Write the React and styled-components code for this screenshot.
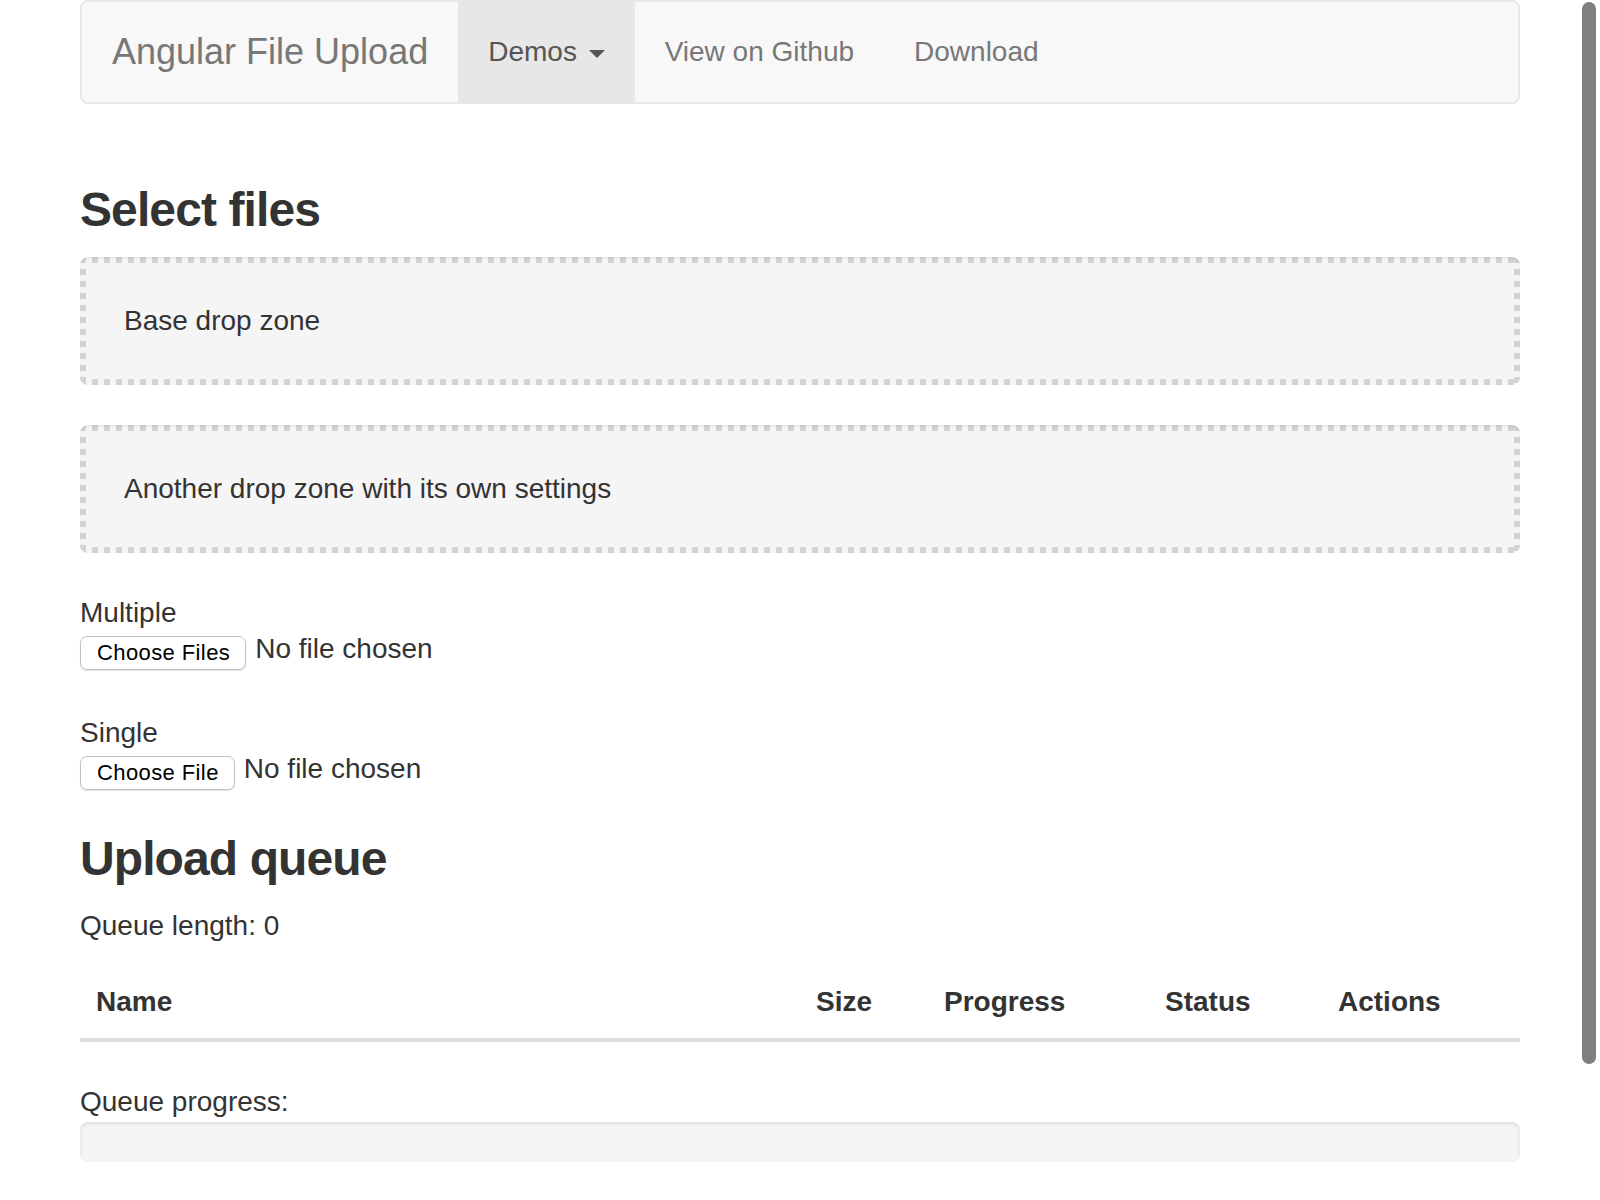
import React from "react";
import styled, { createGlobalStyle } from "styled-components";

const GlobalStyle = createGlobalStyle`
  html {
    overflow: hidden;
  }

  body {
    margin: 0;
    background: #fff;
    color: #333;
    font-family: "Liberation Sans", Arial, Helvetica, sans-serif;
    font-size: 28px;
    line-height: 40px;
  }

  * {
    box-sizing: border-box;
  }
`;

const Container = styled.div`
  width: 1500px;
  margin: 0 auto;
  padding: 0 30px;
`;

const Navbar = styled.nav`
  display: flex;
  height: 104px;
  margin-bottom: 40px;
  background: #f8f8f8;
  border: 2px solid #e7e7e7;
  border-radius: 8px;
`;

const Brand = styled.a`
  padding: 30px;
  font-size: 36px;
  line-height: 40px;
  color: #777;
  text-decoration: none;
  white-space: nowrap;
`;

const NavList = styled.ul`
  display: flex;
  margin: 0;
  padding: 0;
  list-style: none;
`;

const NavItem = styled.li`
  display: block;
`;

const NavLink = styled.a`
  display: block;
  padding: 30px;
  line-height: 40px;
  color: ${(p) => (p.$open ? "#555" : "#777")};
  background: ${(p) => (p.$open ? "#e7e7e7" : "transparent")};
  text-decoration: none;
  white-space: nowrap;
`;

const Caret = styled.b`
  display: inline-block;
  width: 0;
  height: 0;
  margin-left: 4px;
  vertical-align: middle;
  border-top: 8px solid;
  border-right: 8px solid transparent;
  border-left: 8px solid transparent;
`;

const Column = styled.div`
  display: flow-root;
  margin-bottom: ${(p) => p.$gap || 0}px;
`;

const Heading = styled.h3`
  margin: 40px 0 20px;
  font-size: 48px;
  line-height: 1.1;
  font-weight: 700;
  letter-spacing: -0.9px;
  color: #333;
`;

/* square dots, like the thick dotted border of the original */
const dots = "#d3d3d3 0 6px, transparent 6px 12px";

const DropZone = styled.div`
  min-height: 40px;
  padding: 44px;
  margin-bottom: 40px;
  border-radius: 8px;
  background:
    repeating-linear-gradient(90deg, ${dots}) left top / 100% 6px no-repeat,
    repeating-linear-gradient(90deg, ${dots}) left bottom / 100% 6px no-repeat,
    repeating-linear-gradient(180deg, ${dots}) left top / 6px 100% no-repeat,
    repeating-linear-gradient(180deg, ${dots}) right top / 6px 100% no-repeat,
    #f5f5f5;
  box-shadow: inset 0 2px 2px rgba(0, 0, 0, 0.05);
`;

const FieldLabel = styled.div`
  line-height: 40px;
`;

const FilePicker = styled.label`
  display: flex;
  align-items: flex-start;
  gap: 9px;
  height: 40px;

  input {
    display: none;
  }
`;

const ChooseButton = styled.span`
  display: inline-flex;
  align-items: center;
  height: 34px;
  margin-top: 3px;
  padding: 0 15px 0 16px;
  background: #fff;
  border: 1px solid #c2c2c2;
  border-radius: 7px;
  box-shadow: 0 1px 1px rgba(0, 0, 0, 0.12);
  color: #000;
  font-size: 22px;
  letter-spacing: 0.4px;
  line-height: 1;
  white-space: nowrap;
`;

const FileName = styled.span`
  line-height: 32px;
  white-space: nowrap;
`;

const Spacer = styled.div`
  height: 40px;
`;

const Paragraph = styled.p`
  margin: 0 0 20px;
`;

const Table = styled.table`
  width: 100%;
  margin-bottom: 40px;
  border-collapse: collapse;
  table-layout: fixed;
`;

const HeadCell = styled.th`
  width: ${(p) => p.$width}px;
  padding: 16px;
  line-height: 40px;
  text-align: left;
  vertical-align: bottom;
  font-weight: 700;
  border-bottom: 4px solid #ddd;
`;

const Progress = styled.div`
  height: 40px;
  margin-bottom: 40px;
  overflow: hidden;
  background: #f5f5f5;
  border-radius: 8px;
  box-shadow: inset 0 2px 4px rgba(0, 0, 0, 0.1);
`;

const ProgressBar = styled.div`
  height: 100%;
  background: #337ab7;
`;

const Scrollbar = styled.div`
  position: fixed;
  top: 2px;
  right: 4px;
  width: 14px;
  height: 1062px;
  background: #7f7f7f;
  border-radius: 7px;
`;

const columns = [
  { label: "Name", width: 720 },
  { label: "Size", width: 128 },
  { label: "Progress", width: 221 },
  { label: "Status", width: 173 },
  { label: "Actions", width: 198 },
];

function FileSelect({ label, multiple }) {
  return (
    <>
      <FieldLabel>{label}</FieldLabel>
      <FilePicker>
        <input type="file" multiple={multiple} />
        <ChooseButton>{multiple ? "Choose Files" : "Choose File"}</ChooseButton>
        <FileName>No file chosen</FileName>
      </FilePicker>
    </>
  );
}

export default function App() {
  const queue = [];
  const progress = 0;

  return (
    <>
      <GlobalStyle />
      <Container>
        <Navbar>
          <Brand href="#">Angular File Upload</Brand>
          <NavList>
            <NavItem>
              <NavLink href="#" $open>
                Demos <Caret />
              </NavLink>
            </NavItem>
            <NavItem>
              <NavLink href="#">View on Github</NavLink>
            </NavItem>
            <NavItem>
              <NavLink href="#">Download</NavLink>
            </NavItem>
          </NavList>
        </Navbar>

        <Column>
          <Heading>Select files</Heading>
          <DropZone>Base drop zone</DropZone>
          <DropZone>Another drop zone with its own settings</DropZone>
          <FileSelect label="Multiple" multiple />
          <Spacer />
          <FileSelect label="Single" />
        </Column>

        <Column $gap={40}>
          <Heading>Upload queue</Heading>
          <Paragraph>Queue length: {queue.length}</Paragraph>
          <Table>
            <thead>
              <tr>
                {columns.map((c) => (
                  <HeadCell key={c.label} $width={c.width}>
                    {c.label}
                  </HeadCell>
                ))}
              </tr>
            </thead>
            <tbody />
          </Table>
          <div>
            Queue progress:
            <Progress>
              <ProgressBar style={{ width: progress + "%" }} />
            </Progress>
          </div>
        </Column>
      </Container>
      <Scrollbar />
    </>
  );
}
